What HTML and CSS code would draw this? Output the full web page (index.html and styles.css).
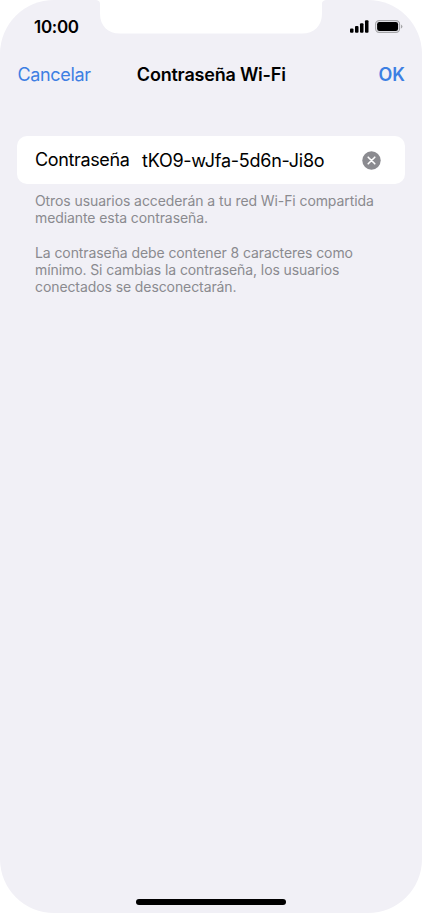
FILE: index.html
```html
<!DOCTYPE html>
<html lang="es">
<head>
<meta charset="utf-8">
<title>Contraseña Wi-Fi</title>
<link rel="stylesheet" href="styles.css">
</head>
<body>
<div class="screen">
  <svg class="notch" viewBox="0 0 232 34" aria-hidden="true"><path d="M0 0H232C229 0 227 1 227 4V13.5C227 26 219 33.5 207 33.5H25C13 33.5 5 26 5 13.5V4C5 1 3 0 0 0Z" fill="#fff"/></svg>
  <header class="status">
    <span class="time">10:00</span>
    <span class="indicators">
      <svg class="signal" viewBox="0 0 19 13" aria-hidden="true"><rect x="0" y="8.5" width="3.5" height="4.2" rx="1"/><rect x="5" y="6" width="3.5" height="6.7" rx="1"/><rect x="10" y="3.2" width="3.5" height="9.5" rx="1"/><rect x="15" y="0.3" width="3.5" height="12.4" rx="1"/></svg>
      <svg class="battery" viewBox="0 0 28 13" aria-hidden="true"><rect x=".6" y=".6" width="24" height="11.8" rx="3.6" fill="none" stroke="#a5a5a8" stroke-width="1.1"/><rect x="2.1" y="2.1" width="21" height="8.8" rx="2.2"/><path d="M26 4.4Q27.4 5.1 27.4 6.5T26 8.6Z" fill="#a5a5a8"/></svg>
    </span>
  </header>
  <nav class="navbar">
    <span class="cancel">Cancelar</span>
    <h1 class="title">Contraseña Wi-Fi</h1>
    <span class="ok">OK</span>
  </nav>
  <main class="content">
    <div class="field">
      <span class="label">Contraseña</span>
      <span class="value">tKO9-wJfa-5d6n-Ji8o</span>
      <svg class="clear" viewBox="0 0 19 19" aria-hidden="true"><circle cx="9.5" cy="9.5" r="9.2" fill="#8b8b90"/><path d="M6.2 6.2l6.6 6.6M12.8 6.2l-6.6 6.6" stroke="#fff" stroke-width="1.6" stroke-linecap="round"/></svg>
    </div>
    <div class="notes">
      <p>Otros usuarios accederán a tu red Wi-Fi compartida<br>mediante esta contraseña.</p>
      <p>La contraseña debe contener 8 caracteres como<br>mínimo. Si cambias la contraseña, los usuarios<br>conectados se desconectarán.</p>
    </div>
  </main>
  <div class="home"></div>
</div>
</body>
</html>
```
FILE: styles.css
```css
body {
  margin: 0;
  background: #fff;
  font-family: Inter, "Liberation Sans", sans-serif;
  color: #000;
}
.screen {
  position: relative;
  box-sizing: border-box;
  width: 422px;
  height: 913px;
  border-radius: 54px;
  background: #f1f0f6;
  overflow: hidden;
  display: flex;
  flex-direction: column;
  white-space: nowrap;
}
.notch {
  position: absolute;
  left: 95px;
  top: 0;
  width: 232px;
  height: 34px;
}
.status {
  height: 53px;
  padding: 0 19px 0 34px;
  display: flex;
  justify-content: space-between;
  align-items: center;
}
.time {
  padding-top: 1px;
  font-size: 17px;
  font-weight: 600;
  letter-spacing: -0.3px;
}
.indicators {
  display: flex;
  gap: 6px;
}
.signal {
  width: 19px;
  height: 13px;
}
.battery {
  width: 28px;
  height: 13px;
}
.navbar {
  height: 42px;
  padding: 0 17px 0 17.5px;
  display: grid;
  grid-template-columns: 1fr auto 1fr;
  align-items: center;
  font-size: 18px;
}
.cancel {
  color: #3d7fe3;
  letter-spacing: -0.35px;
}
.title {
  margin: 0;
  font-size: 18px;
  font-weight: 600;
  letter-spacing: -0.2px;
}
.ok {
  color: #3d7fe3;
  font-weight: 600;
  text-align: right;
}
.content {
  padding: 41px 17px 0;
}
.field {
  box-sizing: border-box;
  height: 48px;
  padding: 0 24.5px 0 18px;
  border-radius: 10px;
  background: #fff;
  display: flex;
  align-items: center;
  font-size: 18px;
}
.label {
  width: 107px;
  padding-bottom: 2px;
  letter-spacing: -0.37px;
}
.value {
  letter-spacing: -0.25px;
}
.clear {
  width: 19px;
  height: 19px;
  margin: 1px 0 0 auto;
}
.notes {
  padding: 8px 18px;
  font-size: 14px;
  line-height: 17.25px;
  letter-spacing: -0.09px;
  color: #8a8a8f;
}
.notes p {
  margin: 0 0 17.25px;
}
.home {
  width: 150px;
  height: 5.5px;
  margin: auto auto 8.5px;
  border-radius: 3px;
  background: #000;
}
```
